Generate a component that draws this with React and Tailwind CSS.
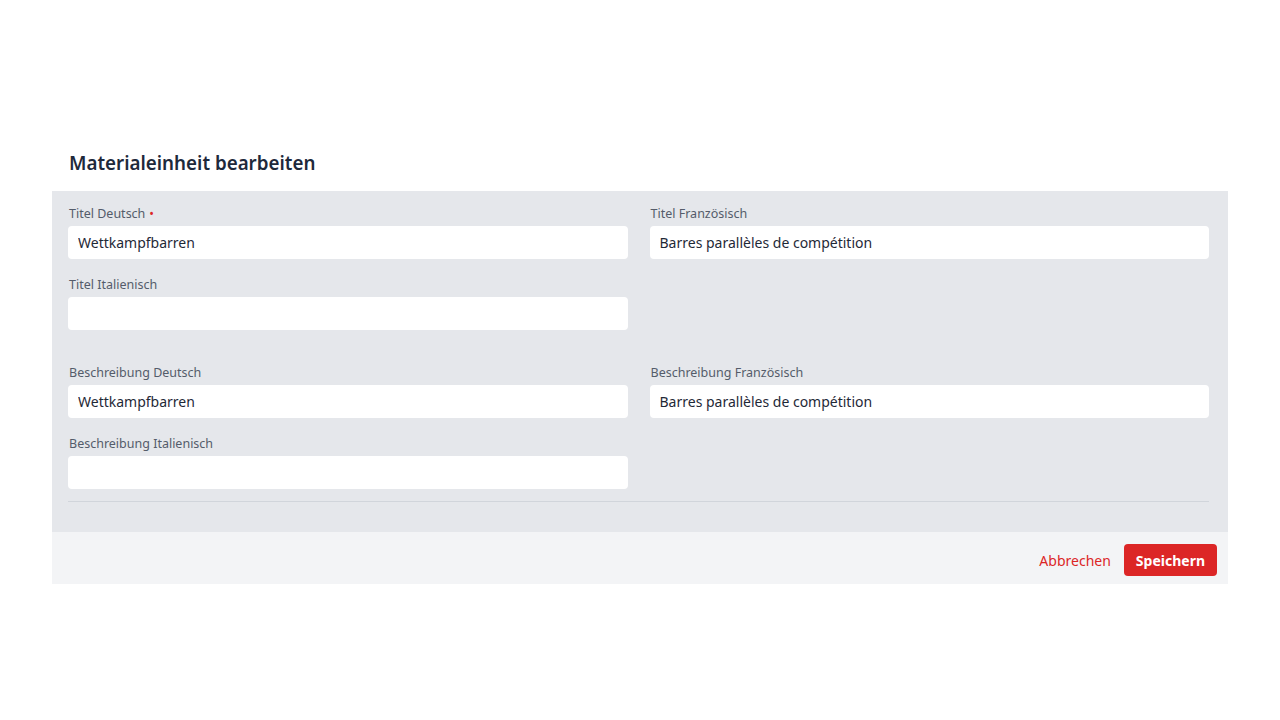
import React from 'react';

const fields = [
  [
    { label: 'Titel Deutsch', value: 'Wettkampfbarren', required: true },
    { label: 'Titel Französisch', value: 'Barres parallèles de compétition' },
    { label: 'Titel Italienisch', value: '' },
  ],
  [
    { label: 'Beschreibung Deutsch', value: 'Wettkampfbarren' },
    { label: 'Beschreibung Französisch', value: 'Barres parallèles de compétition' },
    { label: 'Beschreibung Italienisch', value: '' },
  ],
];

function Field({ label, value, required }) {
  return (
    <div className="flex flex-col">
      <label className="text-[12.5px] leading-5 text-[#545c6a] ml-px">
        {label}
        {required && <span className="text-[#dc2626] ml-1">•</span>}
      </label>
      <input
        type="text"
        defaultValue={value}
        className="mt-[2px] h-[33px] w-full rounded bg-white px-[10px] text-[14px] text-[#1f2937] outline-none"
      />
    </div>
  );
}

export default function App() {
  return (
    <div
      className="min-h-[720px] w-full bg-white pt-[146px] px-[52px]"
      style={{ fontFamily: '"Noto Sans", "Open Sans", sans-serif' }}
    >
      <div className="w-[1176px]">
        <h2 className="h-[45px] pl-[17px] text-[18.8px] font-semibold leading-[34px] text-[#1e293b]">
          Materialeinheit bearbeiten
        </h2>

        <div className="bg-[#e5e7eb] pl-4 pr-[19px] pt-[13px] pb-[30px]">
          <div className="flex flex-col gap-[33px]">
            {fields.map((group, i) => (
              <div key={i} className="grid grid-cols-2 gap-x-[22px] gap-y-4">
                {group.map((f) => (
                  <Field key={f.label} {...f} />
                ))}
              </div>
            ))}
          </div>
          <div className="mt-3 border-t border-[#d1d5db]" />
        </div>

        {/* Footer actions */}
        <div className="flex h-[52px] items-center justify-end gap-[13px] bg-[#f3f4f6] pr-[11px] pt-1">
          <button className="text-[14px] text-[#dc2626]">Abbrechen</button>
          <button className="h-8 rounded bg-[#dc2626] px-3 text-[14px] font-bold text-white">
            Speichern
          </button>
        </div>
      </div>
    </div>
  );
}
